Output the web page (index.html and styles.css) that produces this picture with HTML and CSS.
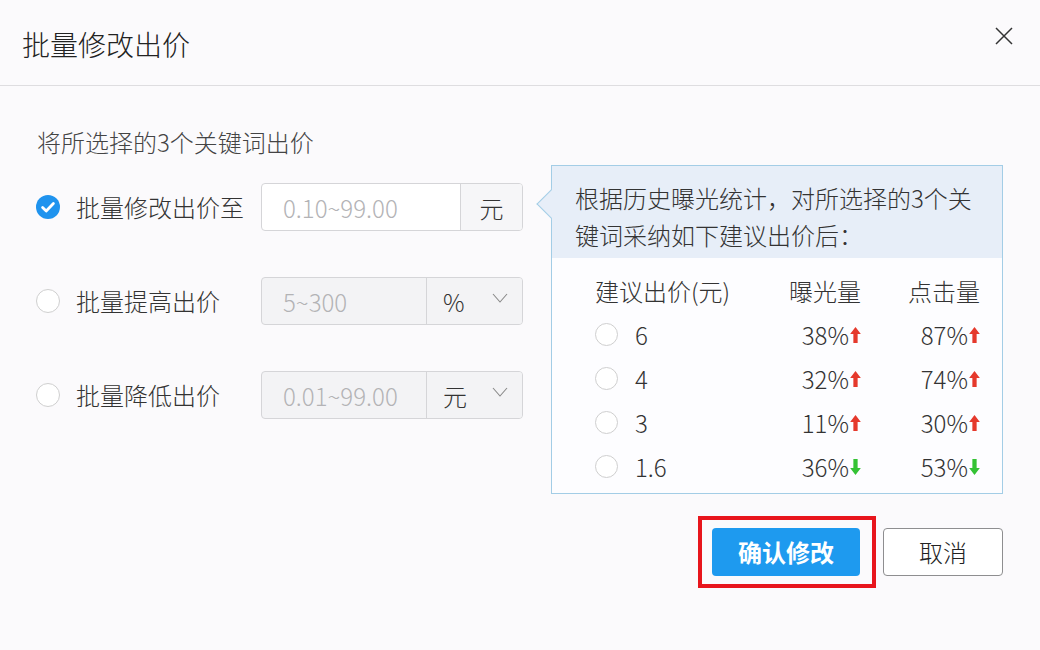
FILE: index.html
```html
<!DOCTYPE html>
<html lang="zh-CN">
<head>
<meta charset="utf-8">
<title>批量修改出价</title>
<link rel="stylesheet" href="styles.css">
</head>
<body>
<div class="dialog">
  <header class="dlg-head">
    <h1 class="dlg-title">批量修改出价</h1>
    <button class="close" aria-label="关闭">
      <svg viewBox="0 0 18 18" width="18" height="18"><path d="M1 1L17 17M17 1L1 17" stroke="#333" stroke-width="1.5" fill="none"/></svg>
    </button>
  </header>
  <div class="dlg-body">
    <p class="intro">将所选择的3个关键词出价</p>
    <div class="main">
      <div class="options">
        <div class="opt">
          <span class="radio on">
            <svg viewBox="0 0 24 24" width="24" height="24"><circle cx="12" cy="12" r="12" fill="#1f93ee"/><path d="M6.6 12.4l3.6 3.5 7.2-7.4" stroke="#fff" stroke-width="2.8" fill="none" stroke-linecap="round" stroke-linejoin="round"/></svg>
          </span>
          <span class="opt-label">批量修改出价至</span>
          <div class="field">
            <span class="field-input">0.10~99.00</span>
            <span class="addon">元</span>
          </div>
        </div>
        <div class="opt">
          <span class="radio"></span>
          <span class="opt-label">批量提高出价</span>
          <div class="field disabled">
            <span class="field-input short">5~300</span>
            <span class="addon select">%<svg class="chev" viewBox="0 0 16 10" width="16" height="10"><path d="M1 1L8 9L15 1" stroke="#8a8a8a" stroke-width="1.1" fill="none"/></svg></span>
          </div>
        </div>
        <div class="opt">
          <span class="radio"></span>
          <span class="opt-label">批量降低出价</span>
          <div class="field disabled">
            <span class="field-input short">0.01~99.00</span>
            <span class="addon select">元<svg class="chev" viewBox="0 0 16 10" width="16" height="10"><path d="M1 1L8 9L15 1" stroke="#8a8a8a" stroke-width="1.1" fill="none"/></svg></span>
          </div>
        </div>
      </div>
      <div class="tip">
        <div class="tip-head">根据历史曝光统计，对所选择的3个关<br>键词采纳如下建议出价后：</div>
        <div class="tip-table">
          <div class="th">建议出价(元)</div>
          <div class="th num">曝光量</div>
          <div class="th num">点击量</div>

          <div class="cell"><span class="radio sm"></span><span class="val">6</span></div>
          <div class="cell num">38%<svg class="arr up" viewBox="0 0 10 15" width="11" height="16"><path d="M5 0L10 6.5H7V15H3V6.5H0Z"/></svg></div>
          <div class="cell num">87%<svg class="arr up" viewBox="0 0 10 15" width="11" height="16"><path d="M5 0L10 6.5H7V15H3V6.5H0Z"/></svg></div>

          <div class="cell"><span class="radio sm"></span><span class="val">4</span></div>
          <div class="cell num">32%<svg class="arr up" viewBox="0 0 10 15" width="11" height="16"><path d="M5 0L10 6.5H7V15H3V6.5H0Z"/></svg></div>
          <div class="cell num">74%<svg class="arr up" viewBox="0 0 10 15" width="11" height="16"><path d="M5 0L10 6.5H7V15H3V6.5H0Z"/></svg></div>

          <div class="cell"><span class="radio sm"></span><span class="val">3</span></div>
          <div class="cell num">11%<svg class="arr up" viewBox="0 0 10 15" width="11" height="16"><path d="M5 0L10 6.5H7V15H3V6.5H0Z"/></svg></div>
          <div class="cell num">30%<svg class="arr up" viewBox="0 0 10 15" width="11" height="16"><path d="M5 0L10 6.5H7V15H3V6.5H0Z"/></svg></div>

          <div class="cell"><span class="radio sm"></span><span class="val">1.6</span></div>
          <div class="cell num">36%<svg class="arr down" viewBox="0 0 10 15" width="11" height="16"><path d="M5 15L10 8.5H7V0H3V8.5H0Z"/></svg></div>
          <div class="cell num">53%<svg class="arr down" viewBox="0 0 10 15" width="11" height="16"><path d="M5 15L10 8.5H7V0H3V8.5H0Z"/></svg></div>
        </div>
      </div>
    </div>
    <div class="actions">
      <div class="highlight"><button class="btn primary">确认修改</button></div>
      <button class="btn">取消</button>
    </div>
  </div>
</div>
</body>
</html>
```

FILE: styles.css
```css
* { box-sizing: border-box; }

html, body {
  margin: 0;
  padding: 0;
  background: #fbfafc;
}

body {
  font-family: "Noto Sans CJK SC", "Noto Sans", sans-serif;
  font-weight: 300;
  color: #333;
  font-size: 24px;
}

.dialog {
  width: 1040px;
  height: 650px;
  background: #fbfafc;
}

.dlg-head {
  height: 86px;
  border-bottom: 1px solid #dedde0;
  display: flex;
  align-items: center;
  justify-content: space-between;
  padding-left: 22px;
}

.dlg-title {
  margin: 0;
  font-size: 28px;
  font-weight: 300;
  color: #222;
  line-height: 40px;
  margin-top: 2px;
}

.close {
  align-self: flex-start;
  margin-top: 27px;
  margin-right: 27px;
  width: 18px;
  height: 18px;
  padding: 0;
  border: 0;
  background: transparent;
  display: flex;
}

.dlg-body {
  padding: 0 37px 0 36px;
}

.intro {
  margin: 40px 0 0 1px;
  line-height: 32px;
  font-size: 24px;
  color: #444;
}

.main {
  margin-top: 7px;
  display: flex;
  justify-content: space-between;
}

.options {
  padding-top: 18px;
  display: flex;
  flex-direction: column;
  gap: 46px;
}

.opt {
  display: flex;
  align-items: center;
  height: 48px;
}

.radio {
  width: 24px;
  height: 24px;
  border-radius: 50%;
  border: 1px solid #cfcfcf;
  background: #fff;
  flex: none;
  display: block;
}

.radio.on {
  border: 0;
  background: transparent;
}

.radio.on svg { display: block; }

.opt-label {
  margin-left: 16px;
  width: 185px;
  color: #333;
  line-height: 32px;
  white-space: nowrap;
}

.field {
  width: 262px;
  height: 48px;
  border: 1px solid #d5d5d8;
  border-radius: 4px;
  display: flex;
  background: #fff;
  overflow: hidden;
}

.field.disabled {
  background: #f3f3f5;
}

.field-input {
  width: 199px;
  padding-left: 21px;
  display: flex;
  align-items: center;
  color: #b3b3b6;
  border-right: 1px solid #d5d5d8;
}

.field-input.short {
  width: 165px;
}

.addon {
  flex: 1;
  display: flex;
  align-items: center;
  justify-content: center;
  background: #f6f6f8;
  color: #333;
}

.field.disabled .addon {
  background: #f3f3f5;
}

.addon.select {
  justify-content: flex-start;
  padding-left: 16px;
  position: relative;
}

.chev {
  position: absolute;
  right: 14px;
  top: 15px;
}

.tip {
  position: relative;
  width: 452px;
  height: 329px;
  border: 1px solid #a3cde6;
  background: #fdfdff;
}

.tip::before {
  content: "";
  position: absolute;
  left: -11.5px;
  top: 27px;
  width: 21px;
  height: 21px;
  background: #e7eef8;
  border-left: 1px solid #a3cde6;
  border-bottom: 1px solid #a3cde6;
  transform: rotate(45deg);
}

.tip-head {
  position: relative;
  background: #e7eef8;
  padding: 13px 20px 5px 23px;
  line-height: 37px;
  white-space: nowrap;
  color: #333;
  height: 92px;
}

.tip-table {
  padding: 10px 22px 0 43px;
  display: grid;
  grid-template-columns: 1fr 130px 119px;
  grid-auto-rows: 44px;
  align-items: center;
}

.th {
  color: #333;
  white-space: nowrap;
}

.num {
  text-align: right;
  display: flex;
  align-items: center;
  justify-content: flex-end;
}

.cell {
  display: flex;
  align-items: center;
  white-space: nowrap;
}

.cell.num {
  justify-content: flex-end;
}

.radio.sm {
  width: 23px;
  height: 23px;
}

.val {
  margin-left: 17px;
}

.arr {
  margin-left: 1px;
  margin-top: 1px;
}

.arr.up { fill: #e5392c; }
.arr.down { fill: #34c234; }

.actions {
  margin-top: 22px;
  display: flex;
  justify-content: flex-end;
  align-items: center;
  gap: 7px;
}

.highlight {
  border: 4px solid #e8151c;
  padding: 8px 12px 8px 10px;
  display: flex;
}

.btn {
  height: 48px;
  width: 120px;
  border-radius: 4px;
  border: 1px solid #8e8e90;
  background: #fff;
  font-family: inherit;
  font-size: 24px;
  font-weight: 300;
  color: #222;
  padding: 0;
  line-height: 1;
}

.btn.primary {
  width: 148px;
  border: 0;
  background: #1e9aef;
  color: #fff;
  font-weight: bold;
}
```
